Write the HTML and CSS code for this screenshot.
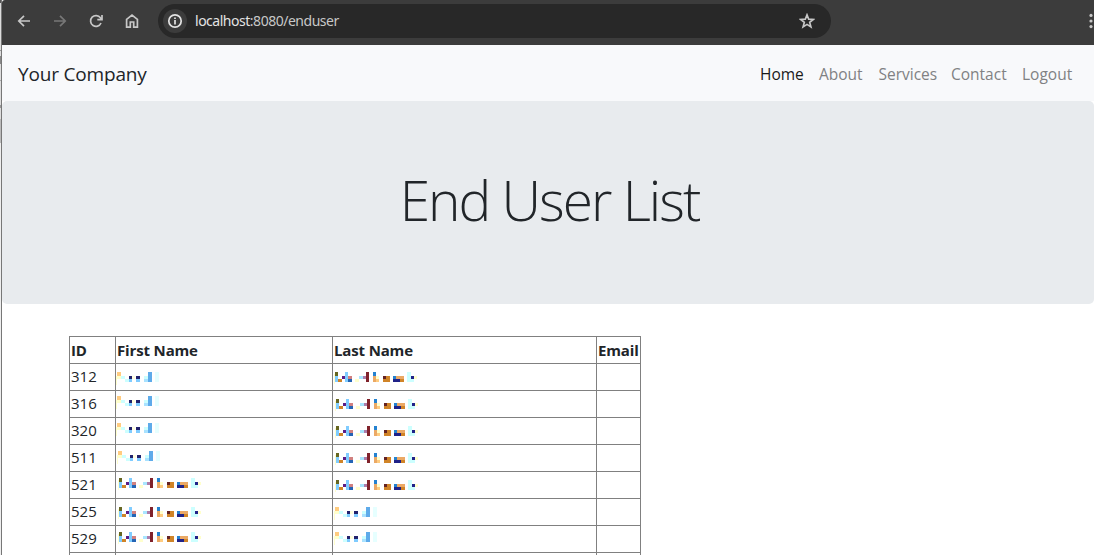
FILE: index.html
```
<!DOCTYPE html>
<html lang="en">
<head>
<meta charset="utf-8">
<title>End User List</title>
<link rel="stylesheet" href="styles.css">
</head>
<body>
<svg width="0" height="0" class="defs" shape-rendering="crispEdges">
  <symbol id="short" viewBox="0 0 44 13">
    <path fill="#ffcc80" d="M1 0h4v4H1z"/><path fill="#ffffcc" d="M1 4h4v3H1zM0 4h1v9H0z"/>
    <path fill="#ccffff" d="M5 4h4v3H5zM9 7h4v3H9zM28 4h4v3h-4z"/>
    <path fill="#22226c" d="M13 4h3v3h-3zM20 4h4v3h-4z"/>
    <path fill="#80ccff" d="M13 7h3v3h-3zM20 7h4v3h-4z"/><path fill="#a9e2ff" d="M28 7h4v3h-4z"/>
    <path fill="#5eabea" d="M32 0h4v10h-4z"/><path fill="#e6ffff" d="M39 0h4v10h-4z"/>
    <path fill="#ffffdd" d="M16 4h3v3h-3z"/>
  </symbol>
  <symbol id="long" viewBox="0 0 84 12">
    <path fill="#ffffcc" d="M0 2h1v10H0zM21 7h4v3h-4zM42 4h3v3h-3zM80 4h3v3h-3z"/>
    <path fill="#666622" d="M1 0h3v4H1z"/><path fill="#80ccff" d="M1 4h3v6H1zM11 0h3v10h-3z"/>
    <path fill="#d08428" d="M4 7h4v3H4zM49 4h7v6h-7zM66 7h4v3h-4z"/>
    <path fill="#5b1c86" d="M8 4h3v3H8z"/><path fill="#d18080" d="M14 4h4v3h-4z"/>
    <path fill="#2464b4" d="M14 7h4v3h-4z"/><path fill="#a9e6ff" d="M25 4h4v3h-4z"/>
    <path fill="#ad7daa" d="M29 4h3v3h-3z"/><path fill="#80222b" d="M32 0h3v10h-3z"/>
    <path fill="#2482d0" d="M39 0h3v4h-3zM59 4h3v3h-3z"/>
    <path fill="#eba965" d="M39 4h3v6h-3zM62 4h8v3h-8z"/><path fill="#ffcc80" d="M42 7h3v3h-3z"/>
    <path fill="#642222" d="M49 4h3v3h-3z"/><path fill="#202288" d="M59 7h7v3h-7zM77 4h3v3h-3z"/>
    <path fill="#ccffff" d="M73 0h4v10h-4zM77 7h3v3h-3z"/>
  </symbol>
</svg>
<div class="screen">
  <div class="edge"></div>
  <div class="window">
    <header class="browser">
      <svg class="icon" viewBox="0 0 16 16"><path d="M14 8H3M8 2.8 2.8 8 8 13.2"/></svg>
      <svg class="icon dim" viewBox="0 0 16 16"><path d="M2 8h11M8 2.8 13.2 8 8 13.2"/></svg>
      <svg class="icon" viewBox="0 0 16 16"><path d="M13 10A5.4 5.4 0 1 1 12.4 4.8L14 6.6M14 2v4.7H9.3"/></svg>
      <svg class="icon" viewBox="0 0 16 16"><path d="M2.6 6.3 8 2l5.4 4.3v7.9H9.7V9H6.3v5.2H2.6z"/></svg>
      <div class="address">
        <span class="info"><svg viewBox="0 0 16 16"><circle cx="8" cy="8" r="6.2"/><path d="M8 7v4.5M8 4.4v1.7"/></svg></span>
        <span class="url"><b>localhost</b>:8080/enduser</span>
        <svg class="star" viewBox="0 0 16 16"><path d="m8 1.9 1.7 4.3 4.6.3-3.6 2.9 1.2 4.5L8 11.4l-3.9 2.5 1.2-4.5L1.7 6.5l4.6-.3z"/></svg>
      </div>
      <svg class="more" viewBox="0 0 4 16"><circle cx="2" cy="2.4" r="1.6"/><circle cx="2" cy="8" r="1.6"/><circle cx="2" cy="13.6" r="1.6"/></svg>
    </header>
    <nav class="navbar">
      <a class="brand">Your Company</a>
      <a class="link active">Home</a><a class="link about">About</a><a class="link services">Services</a><a class="link contact">Contact</a><a class="link logout">Logout</a>
    </nav>
    <section class="hero"><h1>End User List</h1></section>
    <table class="users">
      <colgroup><col class="c-id"><col class="c-first"><col class="c-last"><col class="c-email"></colgroup>
      <tr><th>ID</th><th>First Name</th><th>Last Name</th><th>Email</th></tr>
      <tr><td>312</td><td><svg class="short left"><use href="#short"/></svg></td><td><svg class="long flush"><use href="#long"/></svg></td><td></td></tr>
      <tr><td>316</td><td><svg class="short left up"><use href="#short"/></svg></td><td><svg class="long"><use href="#long"/></svg></td><td></td></tr>
      <tr><td>320</td><td><svg class="short left up"><use href="#short"/></svg></td><td><svg class="long"><use href="#long"/></svg></td><td></td></tr>
      <tr><td>511</td><td><svg class="short lift"><use href="#short"/></svg></td><td><svg class="long"><use href="#long"/></svg></td><td></td></tr>
      <tr><td>521</td><td><svg class="long lift"><use href="#long"/></svg></td><td><svg class="long"><use href="#long"/></svg></td><td></td></tr>
      <tr><td>525</td><td><svg class="long"><use href="#long"/></svg></td><td><svg class="short"><use href="#short"/></svg></td><td></td></tr>
      <tr><td>529</td><td><svg class="long lift"><use href="#long"/></svg></td><td><svg class="short lift"><use href="#short"/></svg></td><td></td></tr>
      <tr><td></td><td></td><td></td><td></td></tr>
    </table>
  </div>
</div>
</body>
</html>
```
FILE: styles.css
```
* { box-sizing: border-box; }
body { margin: 0; background: #fff; color: #212529; font-family: "Open Sans", "Noto Sans", sans-serif; overflow: hidden; }
.defs { position: absolute; }
.screen { display: flex; width: 1094px; height: 555px; overflow: hidden; }
.edge { width: 2px; flex: none; border-right: 1px solid #777; background: linear-gradient(#555 0 3px, #ddd 3px 50px, #999 50px 51px, #ddd 51px 56px, #888 56px 64px, #ddd 64px 80px, #aaa 80px 81px, #ddd 81px 105px, #999 105px 108px, #ddd 108px 119px, #bbb 119px 143px, #eee 143px); }
.window { width: 1092px; flex: none; }
.browser { height: 45px; background: #3c3c3c; display: flex; align-items: flex-start; padding: 4px 0 0 14px; border-top-left-radius: 3px; }
.browser svg { fill: none; stroke: #c7c7c7; stroke-width: 1.7; }
.browser .icon { width: 16px; height: 16px; margin: 9px 20px 0 0; }
.browser .dim { stroke: #777; }
.address { width: 673px; height: 34px; margin-left: -2px; border-radius: 17px; background: #282828; display: flex; align-items: center; padding: 0 16px 0 5px; }
.info { width: 24px; height: 24px; border-radius: 50%; background: #3c3c3c; display: flex; align-items: center; justify-content: center; }
.info svg { width: 16px; height: 16px; stroke: #e3e3e3; }
.url { font: 14px/20px "Noto Sans", sans-serif; letter-spacing: -.48px; color: #c7c7c7; margin-left: 8px; flex: 1; }
.url b { font-weight: 400; color: #e3e3e3; }
.address .star { width: 16px; height: 16px; stroke-width: 1.7; }
.browser .more { width: 4px; height: 16px; margin: 9px 0 0 258px; fill: #c7c7c7; stroke: none; flex: none; }
.navbar { height: 56px; background: #f8f9fb; display: flex; align-items: center; padding: 2px 22px 0 16px; gap: 16px; }
.brand { font-size: 19px; margin-right: auto; white-space: nowrap; letter-spacing: -.18px; }
.link { font-size: 15.5px; color: #808183; width: 43px; white-space: nowrap; }
.active { color: #19191a; }
.about { width: 43.5px; }
.services { width: 56.5px; }
.contact { width: 55px; }
.logout { width: 50px; }
.hero { height: 203px; background: #e8ebee; border-radius: 5px; padding-top: 62px; }
.hero h1 { margin: 0; padding-left: 3px; text-align: center; font-weight: 300; font-size: 55px; line-height: 74px; letter-spacing: -2px; }
.users { table-layout: fixed; width: 572px; border-collapse: collapse; margin: 32px 0 0 67px; }
.c-id { width: 46px; }
.c-first { width: 217px; }
.c-last { width: 264px; }
.c-email { width: 44px; }
.users th, .users td { height: 27px; padding: 1px; border: 1px solid #808080; line-height: 24px; font-size: 15px; text-align: left; vertical-align: top; white-space: nowrap; }
.users td { line-height: 23px; }
.users th { font-weight: 700; letter-spacing: -.15px; }
.users svg { display: block; margin: 7px 0 0 0; height: 13px; }
.users .short { width: 44px; }
.users .long { width: 84px; height: 12px; margin-left: 1px; }
.users .up { margin-top: 4px; }
.users .lift { margin-top: 5px; }
.users .left { margin-left: -1px; }
.users .flush { margin-left: 0; }
```
